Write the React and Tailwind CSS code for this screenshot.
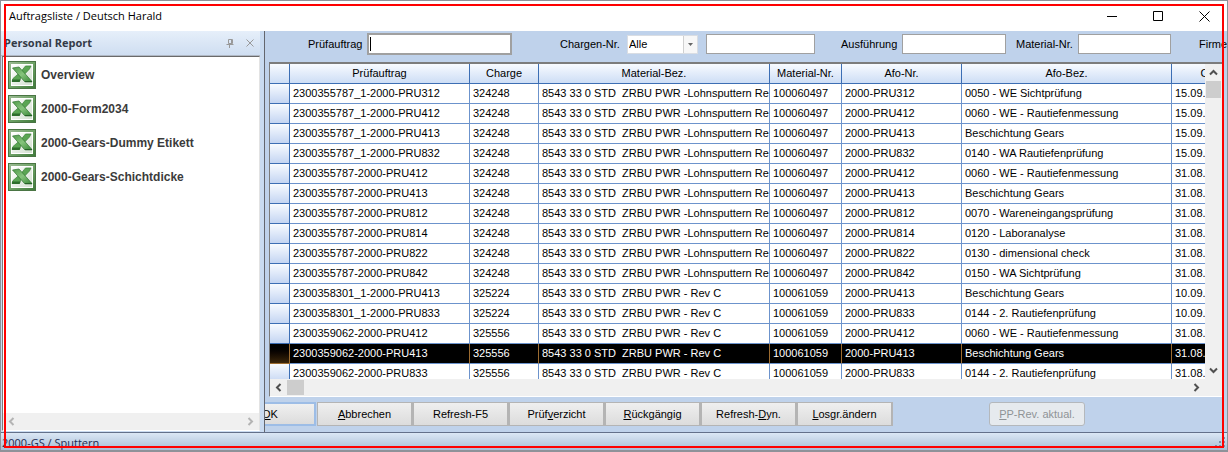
import React from "react";

const reports = ["Overview", "2000-Form2034", "2000-Gears-Dummy Etikett", "2000-Gears-Schichtdicke"];

const re = "8543 33 0 STD  ZRBU PWR -Lohnsputtern Re";
const rev = "8543 33 0 STD  ZRBU PWR - Rev C";

const rows = [
  ["2300355787_1-2000-PRU312", "324248", re, "100060497", "2000-PRU312", "0050 - WE Sichtprüfung", "15.09."],
  ["2300355787_1-2000-PRU412", "324248", re, "100060497", "2000-PRU412", "0060 - WE - Rautiefenmessung", "15.09."],
  ["2300355787_1-2000-PRU413", "324248", re, "100060497", "2000-PRU413", "Beschichtung Gears", "15.09."],
  ["2300355787_1-2000-PRU832", "324248", re, "100060497", "2000-PRU832", "0140 - WA Rautiefenprüfung", "15.09."],
  ["2300355787-2000-PRU412", "324248", re, "100060497", "2000-PRU412", "0060 - WE - Rautiefenmessung", "31.08."],
  ["2300355787-2000-PRU413", "324248", re, "100060497", "2000-PRU413", "Beschichtung Gears", "31.08."],
  ["2300355787-2000-PRU812", "324248", re, "100060497", "2000-PRU812", "0070 - Wareneingangsprüfung", "31.08."],
  ["2300355787-2000-PRU814", "324248", re, "100060497", "2000-PRU814", "0120 - Laboranalyse", "31.08."],
  ["2300355787-2000-PRU822", "324248", re, "100060497", "2000-PRU822", "0130 - dimensional check", "31.08."],
  ["2300355787-2000-PRU842", "324248", re, "100060497", "2000-PRU842", "0150 - WA Sichtprüfung", "31.08."],
  ["2300358301_1-2000-PRU413", "325224", rev, "100061059", "2000-PRU413", "Beschichtung Gears", "10.09."],
  ["2300358301_1-2000-PRU833", "325224", rev, "100061059", "2000-PRU833", "0144 - 2. Rautiefenprüfung", "10.09."],
  ["2300359062-2000-PRU412", "325556", rev, "100061059", "2000-PRU412", "0060 - WE - Rautiefenmessung", "31.08."],
  ["2300359062-2000-PRU413", "325556", rev, "100061059", "2000-PRU413", "Beschichtung Gears", "31.08."],
  ["2300359062-2000-PRU833", "325556", rev, "100061059", "2000-PRU833", "0144 - 2. Rautiefenprüfung", "31.08."],
];
const selectedRow = 13;
const headers = ["Prüfauftrag", "Charge", "Material-Bez.", "Material-Nr.", "Afo-Nr.", "Afo-Bez.", "C"];

const actions = [
  ["", "A", "bbrechen"],
  ["Refresh-F5", "", ""],
  ["Prüf", "v", "erzicht"],
  ["", "R", "ückgängig"],
  ["Refresh-", "D", "yn."],
  ["", "L", "osgr.ändern"],
];

function ExcelIcon() {
  return (
    <svg width="28" height="28" viewBox="0 0 28 28" aria-hidden="true" className="shrink-0">
      <defs>
        <linearGradient id="frame" x1="0" y1="0" x2="1" y2="1">
          <stop offset="0" stopColor="#9dbb95" />
          <stop offset="0.5" stopColor="#6fa267" />
          <stop offset="1" stopColor="#3f7a3a" />
        </linearGradient>
        <linearGradient id="paper" x1="0" y1="0" x2="1" y2="1">
          <stop offset="0" stopColor="#ffffff" />
          <stop offset="1" stopColor="#d3e0d0" />
        </linearGradient>
        <linearGradient id="ribbon" x1="0" y1="0" x2="1" y2="1">
          <stop offset="0" stopColor="#4f9a49" />
          <stop offset="0.5" stopColor="#86c47c" />
          <stop offset="1" stopColor="#3a8838" />
        </linearGradient>
      </defs>
      <rect x="0.5" y="0.5" width="27" height="27" fill="url(#frame)" stroke="#4a7544" />
      <rect x="3" y="3" width="22" height="22" fill="#ffffff" />
      <rect x="4" y="4" width="20" height="20" fill="url(#paper)" />
      <path d="M17.500 5H23l-1.500 3-9 9.500-1 3H4l1-3 8-7z" fill="#5aa553" stroke="#3b7f38" strokeWidth="0.7" />
      <path d="M4 18.500h8.500l-1 2.500H4z" fill="#2d6e2c" />
      <path d="M4.500 7L11 6l13 14.500h-7.500z" fill="url(#ribbon)" stroke="#2f7430" strokeWidth="0.7" />
      <path d="M16.500 20h7.500v1.300h-6.800z" fill="#256126" />
    </svg>
  );
}

function Chevron({ d, className }) {
  return (
    <svg width="9" height="9" viewBox="0 0 9 9" className={className} aria-hidden="true">
      <path d={d} fill="none" stroke="currentColor" strokeWidth="2" />
    </svg>
  );
}
const LEFT = "M6.500 1L3 4.500L6.500 8";
const RIGHT = "M2.500 1L6 4.500L2.500 8";
const UP = "M1 6.500L4.500 3L8 6.500";
const DOWN = "M1 2.500L4.500 6L8 2.500";

function TitleBar() {
  return (
    <header className="flex h-[30px] shrink-0 items-center justify-between bg-white pl-2">
      <h1 className="font-['Open_Sans',sans-serif] text-[11px] leading-4 text-black">Auftragsliste / Deutsch Harald</h1>
      <div className="flex">
        <button aria-label="Minimieren" className="flex w-[46px] justify-center">
          <svg width="11" height="11"><path d="M0 5.500h10" stroke="#000" /></svg>
        </button>
        <button aria-label="Maximieren" className="flex w-[46px] justify-center">
          <svg width="11" height="11"><path d="M.5.5h9v9h-9z" fill="none" stroke="#000" /></svg>
        </button>
        <button aria-label="Schließen" className="flex w-[46px] justify-center">
          <svg width="11" height="11"><path d="M.5.5l10 10M10.500.5l-10 10" stroke="#000" /></svg>
        </button>
      </div>
    </header>
  );
}

function ReportPanel() {
  return (
    <aside className="flex w-[264px] shrink-0 flex-col border-r border-[#63666e] bg-[#c9dbf1] pr-1">
      <div className="flex h-[25px] shrink-0 items-center border-b border-[#b0b8c4] bg-linear-to-b from-[#e6effa] to-[#cfdef1] pl-[3px] pr-[6px]">
        <h2 className="flex-1 font-['Open_Sans',sans-serif] text-[11px] font-bold leading-4 text-[#333a47]">Personal Report</h2>
        <button aria-label="Anheften" className="mr-3">
          <svg width="8" height="9"><path d="M2.500 0.500h4v4h-4zM5.500 1v4M0.500 5.500h7M3.500 6v3" fill="none" stroke="#999" /></svg>
        </button>
        <button aria-label="Panel schließen">
          <svg width="8" height="8"><path d="M.5.5l7 7M7.500.5l-7 7" stroke="#999" /></svg>
        </button>
      </div>
      <div className="ml-px mb-px flex min-h-0 flex-1 flex-col border-y border-l border-r border-b-white border-l-[#7b7b7b] border-r-[#e3e3e3] border-t-[#6a6a6a] bg-white">
        <ul className="flex min-h-0 flex-1 flex-col gap-[6px] pl-[5px] pt-1">
          {reports.map((r) => (
            <li key={r}>
              <button className="flex items-center gap-[5px] text-[12px] font-bold leading-4 text-[#3b3b3b]">
                <ExcelIcon />
                <span>{r}</span>
              </button>
            </li>
          ))}
        </ul>
        <div className="flex h-[17px] shrink-0 items-center justify-between bg-[#f0f0f0] px-1 text-[#b4b4b4]">
          <Chevron d={LEFT} />
          <Chevron d={RIGHT} />
        </div>
      </div>
    </aside>
  );
}

function FilterBar() {
  const box = "h-5 rounded-none border border-[#a0a0a0] bg-white px-1 outline-none";
  return (
    <form className="flex h-[31px] shrink-0 items-center overflow-hidden pb-[5px] pl-[43px] text-[11px] leading-4 text-black">
      <label htmlFor="order" className="w-[59px] shrink-0">Prüfauftrag</label>
      <div className="flex h-[22px] w-[145px] shrink-0 items-center border-2 border-[#a0a0a0] bg-white pl-px">
        <input id="order" autoFocus className="h-[14px] w-full min-w-0 border-l border-black bg-white caret-transparent outline-none" />
      </div>
      <label htmlFor="batchKind" className="ml-12 w-[67px] shrink-0">Chargen-Nr.</label>
      <div className="flex h-[19px] w-[71px] shrink-0 items-center border border-[#d9dde3] bg-white">
        <select id="batchKind" className="h-full min-w-0 flex-1 appearance-none bg-white pl-px outline-none">
          <option>Alle</option>
        </select>
        <span className="flex h-full w-[14px] items-center justify-center border-l border-[#d0d0d0] bg-[#f7f7f7]">
          <svg width="5" height="3" aria-hidden="true"><path d="M0 0h5L2.500 3z" fill="#666" /></svg>
        </span>
      </div>
      <input aria-label="Chargen-Nr." className={`${box} ml-2 w-[109px] shrink-0`} />
      <label htmlFor="version" className="ml-[26px] w-[61px] shrink-0">Ausführung</label>
      <input id="version" className={`${box} w-[104px] shrink-0`} />
      <label htmlFor="material" className="ml-[10px] w-[62px] shrink-0">Material-Nr.</label>
      <input id="material" className={`${box} w-[93px] shrink-0`} />
      <span className="ml-7 shrink-0">Firme</span>
    </form>
  );
}

function OrderGrid() {
  return (
    <section className="ml-1 mr-[5px] flex min-h-0 flex-1 flex-col border-b border-l border-t-2 border-b-white border-l-[#7c7c7c] border-t-[#7c7c7c] bg-white">
      <div className="flex min-h-0 flex-1">
        <div className="min-w-0 flex-1 overflow-hidden">
          <table className="w-[968px] table-fixed border-separate border-spacing-0 text-[11px] leading-4 text-black">
            <colgroup>
              <col className="w-[20px]" />
              <col className="w-[180px]" />
              <col className="w-[69px]" />
              <col className="w-[231px]" />
              <col className="w-[72px]" />
              <col className="w-[120px]" />
              <col className="w-[210px]" />
              <col className="w-[66px]" />
            </colgroup>
            <thead>
              <tr className="h-5 bg-linear-to-b from-[#f8fbff] to-[#cbdcf5]">
                <th aria-label="Auswahl" className="border-b border-r border-[#3c6eb4] p-0" />
                {headers.map((h) => (
                  <th key={h} scope="col" className="border-b border-r border-[#3c6eb4] px-0 pb-0.5 pt-0 font-normal">{h}</th>
                ))}
              </tr>
            </thead>
            <tbody>
              {rows.map((row, i) => {
                const sel = i === selectedRow;
                return (
                  <tr key={i} aria-selected={sel} className={sel ? "h-5 bg-black text-white" : "h-5 bg-white"}>
                    <td className={sel
                      ? "border-b border-r border-[#9c6b30] bg-linear-to-b from-black to-[#3c270c] p-0"
                      : "border-b border-r border-[#3c6eb4] bg-linear-to-b from-[#f8fbff] to-[#c4d5f2] p-0"} />
                    {row.map((c, k) => (
                      <td key={k} className={sel
                        ? "overflow-hidden whitespace-pre border-b border-r border-b-[#6c93cc] border-r-[#9c6b30] pb-0.5 pl-[3px] pr-0 pt-0"
                        : "overflow-hidden whitespace-pre border-b border-r border-[#6c93cc] pb-0.5 pl-[3px] pr-0 pt-0"}>{c}</td>
                    ))}
                  </tr>
                );
              })}
            </tbody>
          </table>
        </div>
        <div className="flex w-[17px] shrink-0 flex-col items-center bg-[#f0f0f0] text-[#505050]">
          <div className="flex h-[17px] items-center"><Chevron d={UP} /></div>
          <div className="h-[17px] w-[15px] bg-[#cdcdcd]" />
          <div className="mt-auto flex h-[17px] items-center"><Chevron d={DOWN} /></div>
        </div>
      </div>
      <div className="flex h-[17px] shrink-0 items-center bg-[#f0f0f0] pr-[21px] text-[#505050]">
        <div className="flex w-[17px] justify-center"><Chevron d={LEFT} /></div>
        <div className="h-[15px] w-[17px] bg-[#cdcdcd]" />
        <Chevron d={RIGHT} className="ml-auto" />
      </div>
    </section>
  );
}

function ActionBar() {
  return (
    <div className="flex h-[35px] shrink-0 items-start overflow-hidden pt-[5px] text-[11px] leading-4 text-black">
      <button className="h-6 w-[51px] shrink-0 border-y-2 border-r-2 border-[#9dbde6] bg-linear-to-b from-[#f0f0f0] to-[#dcdcdc] text-left">
        <span className="-ml-[3px]"><u>O</u>K</span>
      </button>
      <div className="ml-px flex">
        {actions.map(([a, u, b]) => (
          <button key={a + u + b} className="h-6 w-24 border border-r-2 border-[#b4b4b4] bg-linear-to-b from-[#efefef] to-[#dcdcdc]">
            {a}<u>{u}</u>{b}
          </button>
        ))}
      </div>
      <button disabled className="ml-24 h-6 w-24 shrink-0 rounded-[3px] border border-[#b4b8bc] bg-[#e6eaee] text-[#8f9396]">
        <u>P</u>P-Rev. aktual.
      </button>
    </div>
  );
}

function StatusBar() {
  return (
    <footer className="flex h-[18px] shrink-0 items-center justify-between overflow-hidden border-t border-[#63708a] bg-linear-to-b from-[#dbe7f5] to-[#a9bdd6]">
      <span className="pl-px pt-0.5 font-['Open_Sans',sans-serif] text-[11px] leading-4 text-[#1c2c52]">2000-GS / Sputtern</span>
      <svg width="12" height="12" aria-hidden="true">
        <path d="M8 1h2v2h-2zM8 5h2v2h-2zM4 5h2v2h-2zM8 9h2v2h-2zM4 9h2v2h-2zM0 9h2v2h-2z" fill="#7c8ea8" />
      </svg>
    </footer>
  );
}

export default function App() {
  return (
    <div className="relative flex h-screen flex-col overflow-hidden border border-b-2 border-[#8e9299] bg-[#bfd2eb] font-['Liberation_Sans',Arial,sans-serif]">
      <TitleBar />
      <main className="flex min-h-0 flex-1">
        <ReportPanel />
        <div className="flex min-w-0 flex-1 flex-col">
          <FilterBar />
          <OrderGrid />
          <ActionBar />
        </div>
      </main>
      <StatusBar />
      <div className="pointer-events-none absolute bottom-[2px] left-[3px] right-[3px] top-[3px] border-2 border-[#ff0000]" />
    </div>
  );
}
